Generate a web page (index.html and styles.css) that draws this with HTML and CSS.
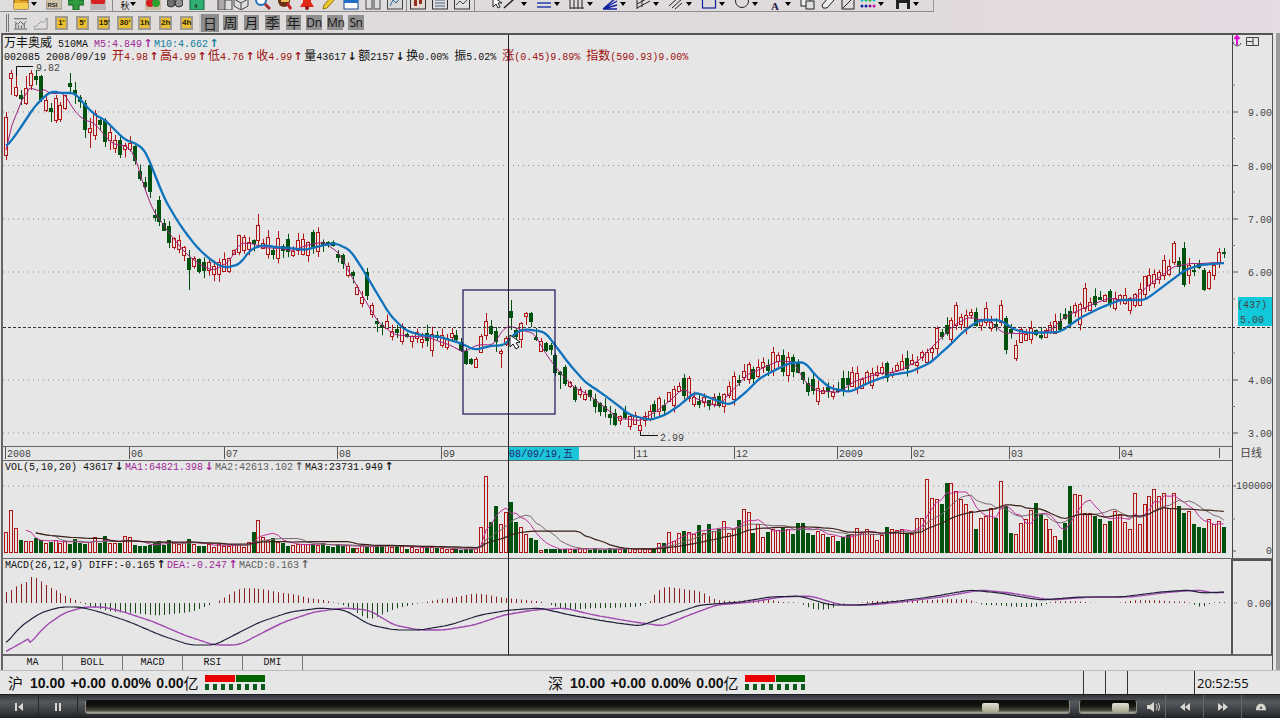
FILE: index.html
```html
<!DOCTYPE html>
<html lang="zh">
<head>
<meta charset="utf-8">
<title>万丰奥威 510MA</title>
<link rel="stylesheet" href="styles.css">
</head>
<body>
<div class="app">
  <header class="toolbars">
    <div class="row-one">
      <svg class="ic tight" viewBox="0 0 16 16"><path d="M1 4h5l1 2h8v9H1z" fill="#e8a428" stroke="#6a4a10"/><path d="M1 9h14v6H1z" fill="#f4cc50"/></svg>
      <svg class="drop" viewBox="0 0 6 4"><path d="M0 0h6L3 4z"/></svg>
      <svg class="ic" viewBox="0 0 16 16"><rect y="3" width="16" height="12" fill="#d0c4a8" stroke="#888"/><text x="1.500" y="13" class="ic-txt">RSI</text></svg>
      <svg class="ic" viewBox="0 0 16 16"><path d="M5 1h6v5h5v5h-5v5H5v-5H0V6h5z" fill="#2f9a40" stroke="#146020"/></svg>
      <svg class="ic" viewBox="0 0 16 16"><rect y="3" width="16" height="13" fill="#bdb6b6"/><rect x="1" y="5" width="14" height="5" rx="2" fill="#d82020"/></svg>
      <i class="sep"></i>
      <span class="autumn">秋</span>
      <svg class="drop" viewBox="0 0 6 4"><path d="M0 0h6L3 4z"/></svg>
      <svg class="ic" viewBox="0 0 16 16"><rect y="2" width="16" height="14" fill="#c8bca4"/><circle cx="5" cy="9" r="4" fill="#d02020"/><circle cx="11" cy="9" r="4" fill="#30a030"/></svg>
      <svg class="ic" viewBox="0 0 16 16"><circle cx="4" cy="9" r="4" fill="#707070" stroke="#333"/><circle cx="12" cy="9" r="4" fill="#909090" stroke="#333"/></svg>
      <svg class="ic" viewBox="0 0 16 16"><rect x="1" y="2" width="14" height="14" fill="#30b070" stroke="#106040"/><text x="5" y="14" class="ic-txt">4</text></svg>
      <svg class="ic narrow" viewBox="0 0 16 16"><rect x="1" y="2" width="9" height="14" fill="#b0a8a8" stroke="#444"/><rect x="8" y="6" width="7" height="10" fill="#dcdcdc" stroke="#444"/></svg>
      <svg class="ic" viewBox="0 0 16 16"><path d="M8 1l7 4v7l-7 4-7-4V5zM1 5l7 4 7-4M8 9v7" fill="#ddd" stroke="#444"/></svg>
      <svg class="ic" viewBox="0 0 16 16"><circle cx="6" cy="6" r="5" fill="#fff" stroke="#2070c0" stroke-width="2"/><path d="M10 10l5 5" stroke="#a03030" stroke-width="3"/></svg>
      <svg class="ic" viewBox="0 0 16 16"><circle cx="7" cy="7" r="6" fill="#6a3018"/><path d="M4 5h8v3H4z" fill="#e8c050"/><path d="M10 9l4 6" stroke="#c02020" stroke-width="3"/></svg>
      <svg class="ic" viewBox="0 0 16 16"><path d="M8 1c4 0 4 4 4 7l3 5H1l3-5c0-3 0-7 4-7z" fill="#e02818"/><circle cx="8" cy="14" r="2" fill="#901010"/></svg>
      <svg class="ic" viewBox="0 0 16 16"><path d="M12 1l3 3-9 10-4 1 1-4z" fill="#f0c830" stroke="#907010"/></svg>
      <svg class="ic" viewBox="0 0 16 16"><rect x="1" y="1" width="14" height="14" fill="#fff" stroke="#104890"/><rect x="1" y="6" width="14" height="3" fill="#2070c8"/></svg>
      <svg class="ic" viewBox="0 0 16 16"><rect x="1" y="1" width="6" height="14" fill="#ddd" stroke="#444"/><rect x="9" y="1" width="6" height="14" fill="#ddd" stroke="#444"/></svg>
      <svg class="ic tight" viewBox="0 0 16 16"><rect x=".5" y="1" width="15" height="14" fill="#d8d8d8" stroke="#444"/><path d="M3 12l3-6 3 3 4-5" fill="none" stroke="#3060a0"/></svg>
      <i class="sep near"></i>
      <svg class="ic" viewBox="0 0 16 16"><rect x=".5" y="1" width="15" height="14" fill="#e4d8d0" stroke="#333"/><path d="M4 6h3v6H4zM9 4h3v6H9z" fill="#903020"/></svg>
      <svg class="ic" viewBox="0 0 16 16"><rect x=".5" y="1" width="15" height="14" fill="#dcdce0" stroke="#333"/><path d="M3 6h10M3 9h10M3 12h10" stroke="#506080"/></svg>
      <svg class="ic tight" viewBox="0 0 16 16"><rect x=".5" y="1" width="15" height="14" fill="#e0e0e0" stroke="#333"/><path d="M2 11l4-4 3 3 5-5" fill="none" stroke="#444"/></svg>
      <i class="sep far"></i>
      <svg class="ic tight cursor" viewBox="0 0 16 16"><path d="M3 3v10l3-3 2 4 2-1-2-4h4z" fill="#fff" stroke="#222"/></svg>
      <svg class="ic tight" viewBox="0 0 16 16"><path d="M1 14L11 5" stroke="#222" stroke-width="1.500"/></svg>
      <svg class="drop" viewBox="0 0 6 4"><path d="M0 0h6L3 4z"/></svg>
      <svg class="ic tight" viewBox="0 0 16 16"><path d="M1 5h14M1 9h14M1 13h14" stroke="#2040b0" stroke-width="1.300"/></svg>
      <svg class="drop" viewBox="0 0 6 4"><path d="M0 0h6L3 4z"/></svg>
      <svg class="ic tight" viewBox="0 0 16 16"><path d="M1 1v14M5 1v14M9 1v14M13 1v14M1 14h14" stroke="#222"/></svg>
      <svg class="drop" viewBox="0 0 6 4"><path d="M0 0h6L3 4z"/></svg>
      <svg class="ic tight" viewBox="0 0 16 16"><path d="M1 15L15 3M1 15L15 7M1 15L15 11M1 15h14" stroke="#1020a0" stroke-width="1.400"/></svg>
      <svg class="drop" viewBox="0 0 6 4"><path d="M0 0h6L3 4z"/></svg>
      <svg class="ic tight" viewBox="0 0 16 16"><path d="M2 2v13M2 14L15 7M2 10L15 3M7 3v10" stroke="#222" fill="none"/></svg>
      <svg class="drop" viewBox="0 0 6 4"><path d="M0 0h6L3 4z"/></svg>
      <svg class="ic tight" viewBox="0 0 16 16"><path d="M1 12L12 2M4 14L15 4M7 15L14 9" stroke="#222" fill="none"/></svg>
      <svg class="drop" viewBox="0 0 6 4"><path d="M0 0h6L3 4z"/></svg>
      <svg class="ic tight" viewBox="0 0 16 16"><rect x="1.500" y="2" width="13" height="12" fill="none" stroke="#1020a0" stroke-width="1.200"/></svg>
      <svg class="drop" viewBox="0 0 6 4"><path d="M0 0h6L3 4z"/></svg>
      <svg class="ic tight" viewBox="0 0 16 16"><circle cx="8" cy="7" r="6.500" fill="none" stroke="#222"/></svg>
      <svg class="drop" viewBox="0 0 6 4"><path d="M0 0h6L3 4z"/></svg>
      <span class="letter">A</span>
      <svg class="drop" viewBox="0 0 6 4"><path d="M0 0h6L3 4z"/></svg>
      <svg class="ic adj" viewBox="0 0 16 16"><rect x="1" y="3" width="9" height="9" fill="#eee" stroke="#222"/><rect x="6" y="7" width="8" height="8" fill="#ddd" stroke="#222"/></svg>
      <svg class="ic adj" viewBox="0 0 16 16"><path d="M2 11l7-8 5 3-7 8H3z" fill="#eee" stroke="#222"/></svg>
      <svg class="ic adj" viewBox="0 0 16 16"><rect x="2" y="3" width="12" height="12" fill="none" stroke="#222"/><path d="M3 14L14 3" stroke="#222"/></svg>
      <svg class="ic tight" viewBox="0 0 16 16"><circle cx="2" cy="6" r="1.500" fill="#00c0c0"/><circle cx="6" cy="6" r="1.500" fill="#00c070"/><circle cx="10" cy="6" r="1.500" fill="#20b020"/><circle cx="14" cy="6" r="1.500" fill="#00c0c0"/><circle cx="2" cy="12" r="1.500" fill="#1020a0"/><circle cx="6" cy="12" r="1.500" fill="#1020a0"/><circle cx="10" cy="12" r="1.500" fill="#801080"/><circle cx="14" cy="12" r="1.500" fill="#c010a0"/></svg>
      <svg class="drop" viewBox="0 0 6 4"><path d="M0 0h6L3 4z"/></svg>
      <svg class="ic tight save" viewBox="0 0 16 16"><rect x="1" y="1" width="14" height="14" fill="#222"/><rect x="4" y="9" width="8" height="6" fill="#ddd"/><rect x="4" y="1" width="8" height="4" fill="#888"/></svg>
      <svg class="drop" viewBox="0 0 6 4"><path d="M0 0h6L3 4z"/></svg>
    </div>
    <div class="row-two">
      <i class="handle"></i>
      <svg class="mini" viewBox="0 0 16 16"><path d="M1 4h14M1 15h14M2 7l3 3 3-3 3 3 3-3M3 9v5M6 11v3M9 11v3M12 9v5" stroke="#555" fill="none"/></svg>
      <svg class="mini gap-l" viewBox="0 0 16 16"><path d="M1 13l4-2 3-4 3 1 4-5" stroke="#777" fill="none" stroke-dasharray="2 1"/><path d="M1 15h14M15 3v12" stroke="#888"/></svg>
      <span class="gold first">1'</span>
      <span class="gold">5'</span>
      <span class="gold">15'</span>
      <span class="gold wide">30'</span>
      <span class="gold">1h</span>
      <span class="gold">2h</span>
      <span class="gold">4h</span>
      <span class="cycle pressed">日</span>
      <span class="cycle">周</span>
      <span class="cycle">月</span>
      <span class="cycle">季</span>
      <span class="cycle">年</span>
      <span class="cycle latin">Dn</span>
      <span class="cycle latin">Mn</span>
      <span class="cycle latin">Sn</span>
    </div>
  </header>

  <main class="workspace">
    <div class="frame">
      <section class="pane pane-price">
        <svg id="price" class="plot" data-top="35" data-h="411"></svg>
        <div class="legend">
          <div class="legend-line"><span class="cjk">万丰奥威</span> 510MA <span class="c-mag">M5:4.849</span><span class="ar c-mag">↑</span><span class="c-blue">M10:4.662</span><span class="ar c-blue">↑</span></div>
          <div class="legend-line second">002085 2008/09/19 <span class="c-red"><span class="cjk">开</span>4.98<span class="ar">↑</span><span class="cjk">高</span>4.99<span class="ar">↑</span><span class="cjk">低</span>4.76<span class="ar">↑</span><span class="cjk">收</span>4.99<span class="ar">↑</span></span><span class="cjk">量</span>43617<span class="ar">↓</span><span class="cjk">额</span>2157<span class="ar">↓</span><span class="cjk">换</span>0.00% <span class="cjk">振</span>5.02% <span class="c-red"><span class="cjk">涨</span>(0.45)9.89% <span class="cjk">指数</span>(590.93)9.00%</span></div>
        </div>
      </section>
      <svg id="dates" class="plot" data-top="446" data-h="15"></svg>
      <section class="pane pane-vol">
        <svg id="vol" class="plot" data-top="461" data-h="97"></svg>
        <div class="legend legend-sub">VOL(5,10,20) 43617<span class="ar">↓</span><span class="c-mag">MA1:64821.398</span><span class="ar c-mag">↓</span><span class="c-gray">MA2:42613.102</span><span class="ar c-gray">↑</span>MA3:23731.949<span class="ar">↑</span></div>
      </section>
      <section class="pane pane-macd">
        <svg id="macd" class="plot" data-top="559" data-h="95"></svg>
        <div class="legend legend-sub">MACD(26,12,9) DIFF:-0.165<span class="ar">↑</span><span class="c-mag">DEA:-0.247</span><span class="ar c-mag">↑</span><span class="c-gray">MACD:0.163</span><span class="ar c-gray">↑</span></div>
      </section>
      <nav class="tabs">
        <span class="tab">MA</span><span class="tab">BOLL</span><span class="tab">MACD</span><span class="tab">RSI</span><span class="tab">DMI</span>
      </nav>
      <i class="crosshair"></i>
    </div>
  </main>

  <footer class="status">
    <div class="market">
      <span class="mk-name">沪</span><b class="mk-val">10.00 +0.00 0.00% 0.00</b><span class="mk-name">亿</span>
      <div class="meter"><div class="meter-top"><i class="m-red"></i><i class="m-green"></i></div><div class="meter-dots"><i></i><i></i><i></i><i></i><i></i><i></i><i></i><i></i></div></div>
    </div>
    <div class="market">
      <span class="mk-name">深</span><b class="mk-val">10.00 +0.00 0.00% 0.00</b><span class="mk-name">亿</span>
      <div class="meter"><div class="meter-top"><i class="m-red"></i><i class="m-green"></i></div><div class="meter-dots"><i></i><i></i><i></i><i></i><i></i><i></i><i></i><i></i></div></div>
    </div>
    <div class="cells"><i></i><i></i><i></i></div>
    <div class="clock">20:52:55</div>
  </footer>

  <div class="player">
    <button class="p-btn"><svg viewBox="0 0 10 10"><path d="M1 1h2v8H1zM9 1v8L4 5z"/></svg></button>
    <button class="p-btn"><svg viewBox="0 0 10 10"><path d="M2 1h2v8H2zM6 1h2v8H6z"/></svg></button>
    <div class="track main-track"><i class="thumb"></i></div>
    <div class="track vol-track"><i class="thumb"></i></div>
    <svg class="speaker" viewBox="0 0 14 12"><path d="M1 4h3l4-3v10L4 8H1z"/><path d="M10 3c1.500 2 1.500 4 0 6M12 2c2 3 2 5 0 8" fill="none" stroke="#d8d8d0"/></svg>
    <button class="p-btn sm"><svg viewBox="0 0 12 10"><path d="M6 1v8L1 5zM11 1v8L6 5z"/></svg></button>
    <button class="p-btn sm"><svg viewBox="0 0 12 10"><path d="M1 1v8l5-4zM6 1v8l5-4z"/></svg></button>
    <button class="p-btn sm"><svg viewBox="0 0 14 12"><path d="M1 10c0-5 2-8 6-8s6 3 6 8z"/><path d="M5 8l2-3 2 3z" fill="#33373b"/></svg></button>
  </div>
</div>
<script src="chart.js"></script>
</body>
</html>
```
FILE: styles.css
```css
* { box-sizing: border-box; }
html, body { margin: 0; height: 100%; overflow: hidden; background: #e6e6e6; }
.app { width: 1280px; height: 718px; display: flex; flex-direction: column; overflow: hidden; font-family: "Liberation Mono", "Noto Sans CJK SC", monospace; font-size: 10px; color: #111; }

/* toolbars */
.toolbars { height: 33px; flex: none; background: linear-gradient(90deg, #dfdcdc 0%, #dfdadb 60%, #e6dbe2 100%); }
.row-one { width: 934px; height: 12px; padding-left: 13px; display: flex; align-items: flex-end; overflow: hidden; border-bottom: 1px solid #8c8c8c; border-right: 1px solid #999; }
.ic { width: 16px; height: 16px; flex: none; margin: 0 6px 1px 0; }
.ic.tight { margin-right: 0; }
.ic.narrow { margin-left: 6px; margin-right: 0; }
.ic.adj { margin-right: 4px; }
.ic.cursor { margin-right: -3px; }
.ic.save { margin-left: 2px; }
.ic-txt { font: bold 6px "Liberation Sans", sans-serif; fill: #222; }
.drop { width: 6px; height: 4px; flex: none; margin: 0 9px 5px 2px; }
.sep { width: 1px; height: 11px; flex: none; background: #888; margin-right: 6px; }
.sep.near { margin-left: 3px; margin-right: 3px; }
.sep.far { margin-left: 4px; margin-right: 15px; }
.autumn { font: 9px/10px "Noto Sans CJK SC", sans-serif; width: 12px; height: 10px; flex: none; margin-right: -3px; text-align: center; }
.letter { font: bold 11px/10px "Liberation Serif", serif; width: 16px; height: 10px; flex: none; text-align: center; color: #1a1a4a; }
.row-two { height: 21px; display: flex; align-items: center; padding-left: 6px; width: 366px; }
.handle { width: 3px; height: 18px; border-left: 1px solid #777; border-right: 1px solid #777; margin-right: 4px; }
.mini { width: 15px; height: 15px; flex: none; }
.gap-l { margin-left: 5px; }
.gold { width: 13px; height: 14px; flex: none; margin-left: 8px; border: 2px solid #a09a90; background: #e8bf30; font: bold 8px/10px "Liberation Sans", sans-serif; text-align: center; color: #2a2000; }
.gold.first { margin-left: 7px; }
.gold.wide { width: 16px; margin-left: 7px; margin-right: -3px; }
.cycle { width: 15px; height: 15px; flex: none; margin-left: 6px; background: #8f8f8f; font: 14px/15px "Noto Sans CJK SC", sans-serif; text-align: center; color: #1c1c1c; }
.cycle.pressed { width: 18px; height: 18px; margin-left: 8px; margin-right: -2px; line-height: 18px; background: #8c8c8c; box-shadow: -2px 0 0 #c8c8c8; }
.cycle.latin { width: 16px; margin-left: 5px; font: 12px/15px "Noto Sans", sans-serif; letter-spacing: -0.4px; white-space: nowrap; }

/* workspace */
.workspace { height: 637px; flex: none; border-right: 4px solid #9c9c9c; padding-right: 3px; }
.frame { position: relative; height: 100%; margin-left: 1px; border-left: 2px solid #666; border-top: 2px solid #555; border-right: 1px solid #555; display: flex; flex-direction: column; }
.plot { display: block; width: 1269px; flex: none; }
.pane { position: relative; flex: none; }
.pane-price { height: 411px; }
.pane-vol { height: 97px; }
.pane-macd { height: 98px; border-top: 1px solid #666; border-bottom: 2px solid #666; }
.legend { position: absolute; left: 1px; top: 0; }
.legend-line { height: 13px; line-height: 13px; margin-top: 1px; white-space: pre; }
.legend-line.second { margin-top: 0; }
.legend-sub { left: 2px; top: 0; line-height: 13px; white-space: pre; }
.cjk { display: inline-block; height: 12px; font-family: "Noto Sans CJK SC", sans-serif; font-size: 12px; line-height: 12px; }
.ar { display: inline-block; width: 12px; height: 11px; text-align: center; font-family: "DejaVu Sans", sans-serif; font-size: 11px; font-weight: bold; line-height: 11px; }
.c-red { color: #a01010; }
.c-mag { color: #a02898; }
.c-blue { color: #1080a0; }
.c-gray { color: #606060; }
.crosshair { position: absolute; left: 505px; top: 0; width: 1px; height: 620px; background: #222; }
.tabs { height: 14px; flex: none; display: flex; font-size: 10px; line-height: 14px; text-align: center; }
.tab { width: 60px; border-right: 1px solid #777; }

/* status */
.status { height: 24px; flex: none; display: flex; align-items: center; border-top: 1px solid #bbb; position: relative; }
.market { width: 540px; flex: none; padding-left: 8px; display: flex; align-items: center; color: #111; }
.mk-name { font: 15px/20px "Noto Sans CJK SC", sans-serif; }
.mk-val { font: bold 14px/20px "Liberation Sans", sans-serif; margin-left: 7px; word-spacing: 1.500px; }
.meter { margin-left: 6px; width: 60px; }
.meter-top { display: flex; gap: 1px; height: 7px; }
.m-red { width: 30px; background: #e80000; }
.m-green { width: 29px; background: #006400; }
.meter-dots { display: flex; gap: 4px; margin-top: 2px; }
.meter-dots i { width: 4px; height: 6px; background: #0a5a1e; }
.cells { width: 132px; margin-left: -18px; height: 100%; display: flex; flex: none; }
.cells i { width: 22px; border-right: 1px solid #333; }
.clock { padding-left: 2px; border-left: 1px solid #333; height: 100%; font: 13px/25px "Noto Sans", sans-serif; color: #111; }

/* player */
.player { height: 24px; flex: none; display: flex; align-items: center; background: linear-gradient(180deg, #33363a 0%, #55595e 30%, #3a3e42 70%, #1f2123 100%); border-top: 1px solid #1b1d1f; }
.p-btn { width: 39px; height: 100%; flex: none; padding: 0; background: none; border: 0; border-right: 1px solid #23262a; display: flex; align-items: center; justify-content: center; }
.p-btn svg { width: 10px; height: 10px; fill: #d8d8d0; }
.p-btn.sm { border-left: 1px solid #62666a; border-right: 0; width: 38px; }
.p-btn.sm svg { width: 12px; height: 10px; }
.track { height: 14px; flex: none; position: relative; border: 1px solid #8a8a80; border-top-color: #111; border-radius: 3px; background: linear-gradient(180deg, #0a0a0a 0%, #15150f 40%, #4c4c42 80%, #b8b8a8 100%); }
.main-track { width: 985px; margin-left: 7px; }
.vol-track { width: 58px; margin-left: 9px; }
.thumb { position: absolute; top: 2px; width: 17px; height: 9px; border-radius: 2px; background: linear-gradient(180deg, #e0e0d4, #a8a890); }
.main-track .thumb { left: 896px; }
.vol-track .thumb { left: 32px; }
.speaker { width: 14px; height: 12px; flex: none; margin-left: 9px; margin-right: 5px; fill: #d8d8d0; }
```
FILE: chart.js
```js
(function () {
  var NS = "http://www.w3.org/2000/svg";
  var STEP = 4.95, N = 247, X0 = 6;
  var RED = "#b01414", GREEN = "#00530f", BG = "#e6e6e6";
  var seed = 20080919;
  function rnd() { seed = (seed * 1664525 + 1013904223) >>> 0; return seed / 4294967296; }
  function interp(pts, x) {
    if (x <= pts[0][0]) return pts[0][1];
    for (var i = 1; i < pts.length; i++) {
      if (x <= pts[i][0]) {
        var a = pts[i - 1], b = pts[i];
        return a[1] + (b[1] - a[1]) * (x - a[0]) / (b[0] - a[0]);
      }
    }
    return pts[pts.length - 1][1];
  }
  function smooth(pts, r) {
    return function (x) {
      var s = 0, n = 0;
      for (var d = -r; d <= r; d += 2) { s += interp(pts, x + d); n++; }
      return s / n;
    };
  }
  function el(parent, name, attrs, text) {
    var e = document.createElementNS(NS, name);
    for (var k in attrs) e.setAttribute(k, attrs[k]);
    if (text !== undefined) e.textContent = text;
    parent.appendChild(e);
    return e;
  }
  function line(p, x1, y1, x2, y2, color, extra) {
    var a = { x1: x1, y1: y1, x2: x2, y2: y2, stroke: color };
    for (var k in extra) a[k] = extra[k];
    return el(p, "line", a);
  }
  function poly(p, fn, x1, x2, color, width) {
    var s = [];
    for (var x = x1; x <= x2; x += 2) s.push(x + "," + fn(x).toFixed(1));
    el(p, "polyline", { points: s.join(" "), fill: "none", stroke: color, "stroke-width": width, "stroke-linejoin": "round" });
  }
  function setup(id) {
    var s = document.getElementById(id);
    var top = +s.dataset.top, h = +s.dataset.h;
    s.setAttribute("viewBox", "3 " + top + " 1269 " + h);
    s.setAttribute("height", h);
    return s;
  }
  function axisLabel(s, x, y, t, anchor) {
    el(s, "text", { x: x, y: y, "font-family": "Liberation Mono, monospace", "font-size": 10, fill: "#444", "text-anchor": anchor || "end" }, t);
  }

  /* ---------- price pane ---------- */
  var ma10pts = [[6,147],[15,136],[25,121],[35,106],[45,96],[52,91],[60,93],[75,93],[85,105],[95,115],[105,120],[115,130],[125,140],[135,143],[145,150],[155,175],[165,200],[180,225],[195,245],[205,255],[215,263],[225,268],[240,264],[250,250],[262,245],[275,247],[290,248],[305,250],[320,246],[335,243],[350,250],[362,268],[375,290],[390,315],[405,330],[420,335],[440,337],[460,343],[475,350],[490,346],[505,345],[515,333],[525,329],[545,332],[555,345],[570,365],[585,382],[600,392],[615,403],[630,415],[650,420],[665,415],[680,405],[695,392],[710,398],[730,405],[745,393],[760,378],[775,370],[790,363],[805,362],[815,375],[830,388],[850,392],[870,382],[890,375],[910,372],[930,363],[950,345],[965,330],[980,320],[1000,320],[1015,330],[1030,333],[1060,332],[1080,318],[1100,308],[1120,300],[1145,300],[1165,285],[1185,270],[1200,265],[1224,263]];
  var blue = smooth(ma10pts, 4);
  function purple(x) {
    if (x < 44) return interp([[6,150],[12,125],[22,100],[30,88],[44,92]], x);
    var f = blue(x + 11), g = blue(x);
    return f + (f - g) * 0.45;
  }
  var xOf = function (i) { return X0 + i * STEP; };
  var idxOf = function (x) { return Math.round((x - X0) / STEP); };

  /* Hand-read candles: [x, red?, bodyTop, bodyBottom, high, low] */
  var fixed = [
    [6,1,117,155,112,160],[11,1,73,78,70,95],[16,1,87,95,72,97],[21,0,95,99,90,105],[26,1,88,103,76,105],[31,1,73,85,70,90],[36,0,76,80,70,85],[41,0,76,100,75,102],[46,1,100,110,95,112],[51,0,108,112,103,122],[56,1,98,120,95,123],[61,1,105,119,102,122],[66,1,95,108,95,110],[71,0,83,87,73,93],[76,0,90,94,82,104],[81,0,97,102,95,108],[86,0,103,130,100,138],[91,1,128,132,118,148],[96,1,113,135,110,140],[101,0,120,125,118,130],[106,0,120,142,118,147],[111,1,132,140,125,150],[116,1,140,148,135,153],[121,0,140,155,135,158],
    [150,0,165,192,162,198],[160,0,200,222,196,226],[190,0,258,270,250,290],[258,1,225,240,214,248],[365,0,272,296,268,300],[447,1,338,347,334,350],[452,1,333,337,328,342],[457,0,335,340,330,343],[463,0,342,351,338,352],[467,0,351,364,348,365],[472,0,359,364,358,365],[477,1,359,367,357,368],[482,1,336,352,334,353],[487,1,321,335,313,340],[492,0,326,334,320,335],[497,0,331,342,327,352],[502,1,351,353,349,368],[507,1,338,344,336,346],[511,0,311,318,300,330],[516,0,330,337,328,340],[521,1,323,339,322,348],[526,1,313,316,312,325],[531,0,313,322,312,327],[536,0,337,340,328,341],[541,1,341,351,338,352],[546,0,343,351,342,352],[551,0,345,350,343,355],[556,0,355,373,353,376],[561,0,372,375,371,389],[566,0,367,384,365,386],[571,1,382,386,381,388],[576,0,387,400,385,402],
    [640,1,425,430,418,432],[690,1,378,398,376,402],[775,1,352,370,347,376],[955,1,305,325,302,330],[985,1,308,322,302,326],[1000,1,305,322,300,326],[1005,0,318,350,316,354],[1018,1,345,358,340,361],[1085,1,288,308,283,312],[1165,1,260,275,255,280],[1175,1,243,262,241,265],[1185,0,248,285,242,287],[1190,1,265,275,258,284],[1195,0,270,272,264,276],[1205,0,270,290,268,291],[1209,1,272,288,270,290],[1214,1,265,275,263,280],[1219,1,252,262,248,268],[1224,0,252,254,248,258]
  ];
  var over = {};
  fixed.forEach(function (c) { over[idxOf(c[0])] = c; });

  var priceSvg = setup("price");
  [112, 165.5, 219, 272, 380, 433].forEach(function (y) {
    line(priceSvg, 3, y, 1232, y, "#8a8a8a", { "stroke-dasharray": "1 4" });
  });
  var candleRed = [];
  for (var i = 0; i < N; i++) {
    var x = xOf(i), cx = Math.round(x) + 0.5, c = over[i], red, top, bot, hi, lo;
    if (c) { red = !!c[1]; top = c[2]; bot = c[3]; hi = c[4]; lo = c[5]; }
    else {
      var mid = purple(x) + (rnd() - 0.5) * 10;
      var slope = purple(x + 5) - purple(x - 5);
      red = rnd() < (slope < -1 ? 0.75 : slope > 1 ? 0.3 : 0.58);
      var size = 3 + rnd() * rnd() * 22;
      top = mid - size / 2; bot = mid + size / 2;
      hi = top - rnd() * 8; lo = bot + rnd() * 8;
    }
    candleRed.push(red);
    var col = red ? RED : GREEN;
    line(priceSvg, cx, hi, cx, lo, col);
    if (red) el(priceSvg, "rect", { x: cx - 2, y: Math.round(top) + 0.5, width: 3, height: Math.max(1, Math.round(bot - top)), fill: BG, stroke: col });
    else el(priceSvg, "rect", { x: cx - 2.5, y: Math.round(top), width: 4, height: Math.max(1, Math.round(bot - top)), fill: col });
  }
  poly(priceSvg, purple, 6, 1222, "#a0207c", 1);
  poly(priceSvg, blue, 6, 1224, "#0f72bd", 2.3);
  line(priceSvg, 3, 327.5, 1232, 327.5, "#333", { "stroke-dasharray": "3 2" });
  el(priceSvg, "rect", { x: 463, y: 290, width: 92, height: 124, fill: "none", stroke: "#14145a", "stroke-width": 1.2 });
  el(priceSvg, "path", { d: "M16.5 76V66.5H33", fill: "none", stroke: "#111" });
  el(priceSvg, "path", { d: "M640.5 432V435.5H658", fill: "none", stroke: "#111" });
  axisLabel(priceSvg, 36, 71, "9.82", "start");
  axisLabel(priceSvg, 660, 441, "2.99", "start");
  el(priceSvg, "path", { d: "M510 335V347L513 344L516 349L519 347L516 343L520 342Z", fill: "#fff", stroke: "#111" });
  /* axis */
  line(priceSvg, 1232.5, 35, 1232.5, 446, "#444");
  [[112,"9.00"],[165.5,"8.00"],[219,"7.00"],[272,"6.00"],[380,"4.00"],[433,"3.00"]].forEach(function (t) {
    axisLabel(priceSvg, 1272, t[0] + 4, t[1]);
    line(priceSvg, 1232, t[0], 1238, t[0], "#555");
  });
  [85,138.5,192,245.5,299,353,406.5].forEach(function (y) { line(priceSvg, 1232, y, 1235, y, "#777"); });
  el(priceSvg, "rect", { x: 1238, y: 297, width: 34, height: 29, fill: "#12c9dc" });
  axisLabel(priceSvg, 1267, 308, "(437)");
  axisLabel(priceSvg, 1264, 323, "5.00");
  line(priceSvg, 1232, 327.5, 1272, 327.5, "#333", { "stroke-dasharray": "3 2" });
  el(priceSvg, "path", { d: "M1237 36V45M1234.5 39L1237 36L1239.5 39", fill: "none", stroke: "#e010d8", "stroke-width": 2 });
  el(priceSvg, "path", { d: "M1233 42C1234 47 1240 47 1241 43", fill: "none", stroke: "#444" });
  el(priceSvg, "path", { d: "M1246.5 37.5H1258.5V45.5H1246.5ZM1246.5 41.5H1253M1253 37.5V45.5", fill: "none", stroke: "#444" });

  /* ---------- date axis ---------- */
  var dSvg = setup("dates");
  line(dSvg, 3, 446.5, 1232, 446.5, "#666");
  line(dSvg, 3, 460.5, 1232, 460.5, "#666");
  [[6,"2008"],[130,"06"],[225,"07"],[338,"08"],[442,"09"],[635,"11"],[735,"12"],[838,"2009"],[912,"02"],[1010,"03"],[1120,"04"]].forEach(function (t) {
    line(dSvg, t[0] - 0.5, 447, t[0] - 0.5, 459, "#555");
    axisLabel(dSvg, t[0] + 1, 457, t[1], "start");
  });
  line(dSvg, 1219.5, 448, 1219.5, 458, "#555");
  el(dSvg, "rect", { x: 509, y: 447, width: 70, height: 13, fill: "#1cc6da" });
  el(dSvg, "text", { x: 509, y: 457, "font-family": "Liberation Mono, Noto Sans CJK SC, monospace", "font-size": 10, fill: "#24246a" }, "08/09/19,五");
  line(dSvg, 1232.5, 446, 1232.5, 461, "#444");
  el(dSvg, "text", { x: 1240, y: 457, "font-family": "Noto Sans CJK SC, sans-serif", "font-size": 11, fill: "#444" }, "日线");

  /* ---------- volume pane ---------- */
  var vSvg = setup("vol");
  var BASE = 552;
  var env = [[6,20],[11,42],[16,24],[21,14],[130,14],[135,8],[170,12],[185,14],[195,9],[250,9],[258,34],[263,15],[300,8],[400,6],[470,4],[478,3],[655,4],[670,18],[700,24],[745,38],[760,26],[800,30],[830,14],[860,22],[900,22]];
  var specials = {481:25,486:76,491:30,496:46,501:28,506:40,511:50,516:30,521:25,526:18,531:14,536:12};
  var topsEnd = [175,190,190,140,140,25,80,85,100,35,35,60,85,100,120,175,140,135,110,140,30,105,185,188,155,145,118,95,130,145,175,195,208,155,45,68,72,125,125,135,145,160,150,120,130,152,175,65,160,100,75,55,75,65,110,65,105,125,120,160,168,170,145,160,150,168];
  var vols = [];
  var tailStart = idxOf(902);
  for (i = 0; i < N; i++) {
    x = xOf(i);
    var h, sp = specials[Math.round(x)];
    if (i >= tailStart && topsEnd[i - tailStart] !== undefined) h = (243 - topsEnd[i - tailStart]) / 3;
    else if (sp) h = sp;
    else if (x <= 20) h = interp(env, x);
    else if (x > 250 && x < 265) h = interp(env, x);
    else h = interp(env, x) * (0.55 + rnd() * 0.6);
    vols.push(h);
  }
  line(vSvg, 3, 486, 1232, 486, "#8a8a8a", { "stroke-dasharray": "1 4" });
  for (i = 0; i < N; i++) {
    x = Math.round(xOf(i)) + 0.5; h = Math.max(1, Math.round(vols[i]));
    if (candleRed[i]) el(vSvg, "rect", { x: x - 2, y: BASE - h + 0.5, width: 3, height: h, fill: BG, stroke: RED });
    else el(vSvg, "rect", { x: x - 2.5, y: BASE - h, width: 4, height: h + 1, fill: GREEN });
  }
  [[5, "#c0309a", 1], [10, "#7c6470", 1], [20, "#3a2018", 1.2]].forEach(function (m) {
    var pts = [];
    for (var k = Math.min(m[0] - 1, 6); k < N; k++) {
      var a = Math.max(0, k - m[0] + 1), s = 0;
      for (var j = a; j <= k; j++) s += vols[j];
      pts.push(xOf(k).toFixed(1) + "," + (BASE - s / (k - a + 1)).toFixed(1));
    }
    el(vSvg, "polyline", { points: pts.join(" "), fill: "none", stroke: m[1], "stroke-width": m[2] });
  });
  line(vSvg, 1232.5, 461, 1232.5, 558, "#444");
  line(vSvg, 1232, 486, 1236, 486, "#555");
  line(vSvg, 1232, 519, 1235, 519, "#777");
  line(vSvg, 1232, 551, 1236, 551, "#555");
  axisLabel(vSvg, 1272, 489, "100000");
  axisLabel(vSvg, 1272, 554, "0");

  /* ---------- MACD pane ---------- */
  var mSvg = setup("macd");
  var dif = smooth([[5,645],[20,627],[40,613],[60,607],[80,607],[100,612],[130,622],[160,635],[190,645],[215,645],[240,632],[260,622],[290,612],[320,608],[345,610],[370,625],[395,630],[420,630],[450,625],[480,615],[510,610],[540,608],[570,615],[610,622],[640,626],[670,615],[700,605],[740,602],[770,597],[800,596],[830,605],[860,605],[890,602],[930,597],[970,590],[1000,593],[1040,600],[1080,597],[1120,597],[1160,592],[1190,590],[1200,593],[1224,592]], 6);
  function lag(x) { return x < 650 ? 24 : x > 760 ? 11 : 24 - 13 * (x - 650) / 110; }
  function dea(x) { return x < 30 ? interp([[5,652],[30,638]], x) : dif(x - lag(x)); }
  for (i = 0; i < N; i++) {
    x = xOf(i);
    var v = (dea(x) - dif(x)) * (x < 650 ? 1.2 : 2);
    v = Math.max(-17, Math.min(26, v));
    var px = Math.round(x) + 0.5;
    line(mSvg, px, 603, px, 603 - v, v >= 0 ? "#8a2020" : "#1a4a1a");
  }
  poly(mSvg, dea, 6, 1224, "#a04ab0", 1.4);
  poly(mSvg, dif, 6, 1224, "#20203a", 1.2);
  el(mSvg, "rect", { x: 1232, y: 560, width: 40, height: 110, fill: BG, stroke: "#555", "stroke-width": 2 });
  line(mSvg, 1232, 603, 1237, 603, "#555", { "stroke-dasharray": "1 1" });
  axisLabel(mSvg, 1271, 607, "0.00");
})();
```
